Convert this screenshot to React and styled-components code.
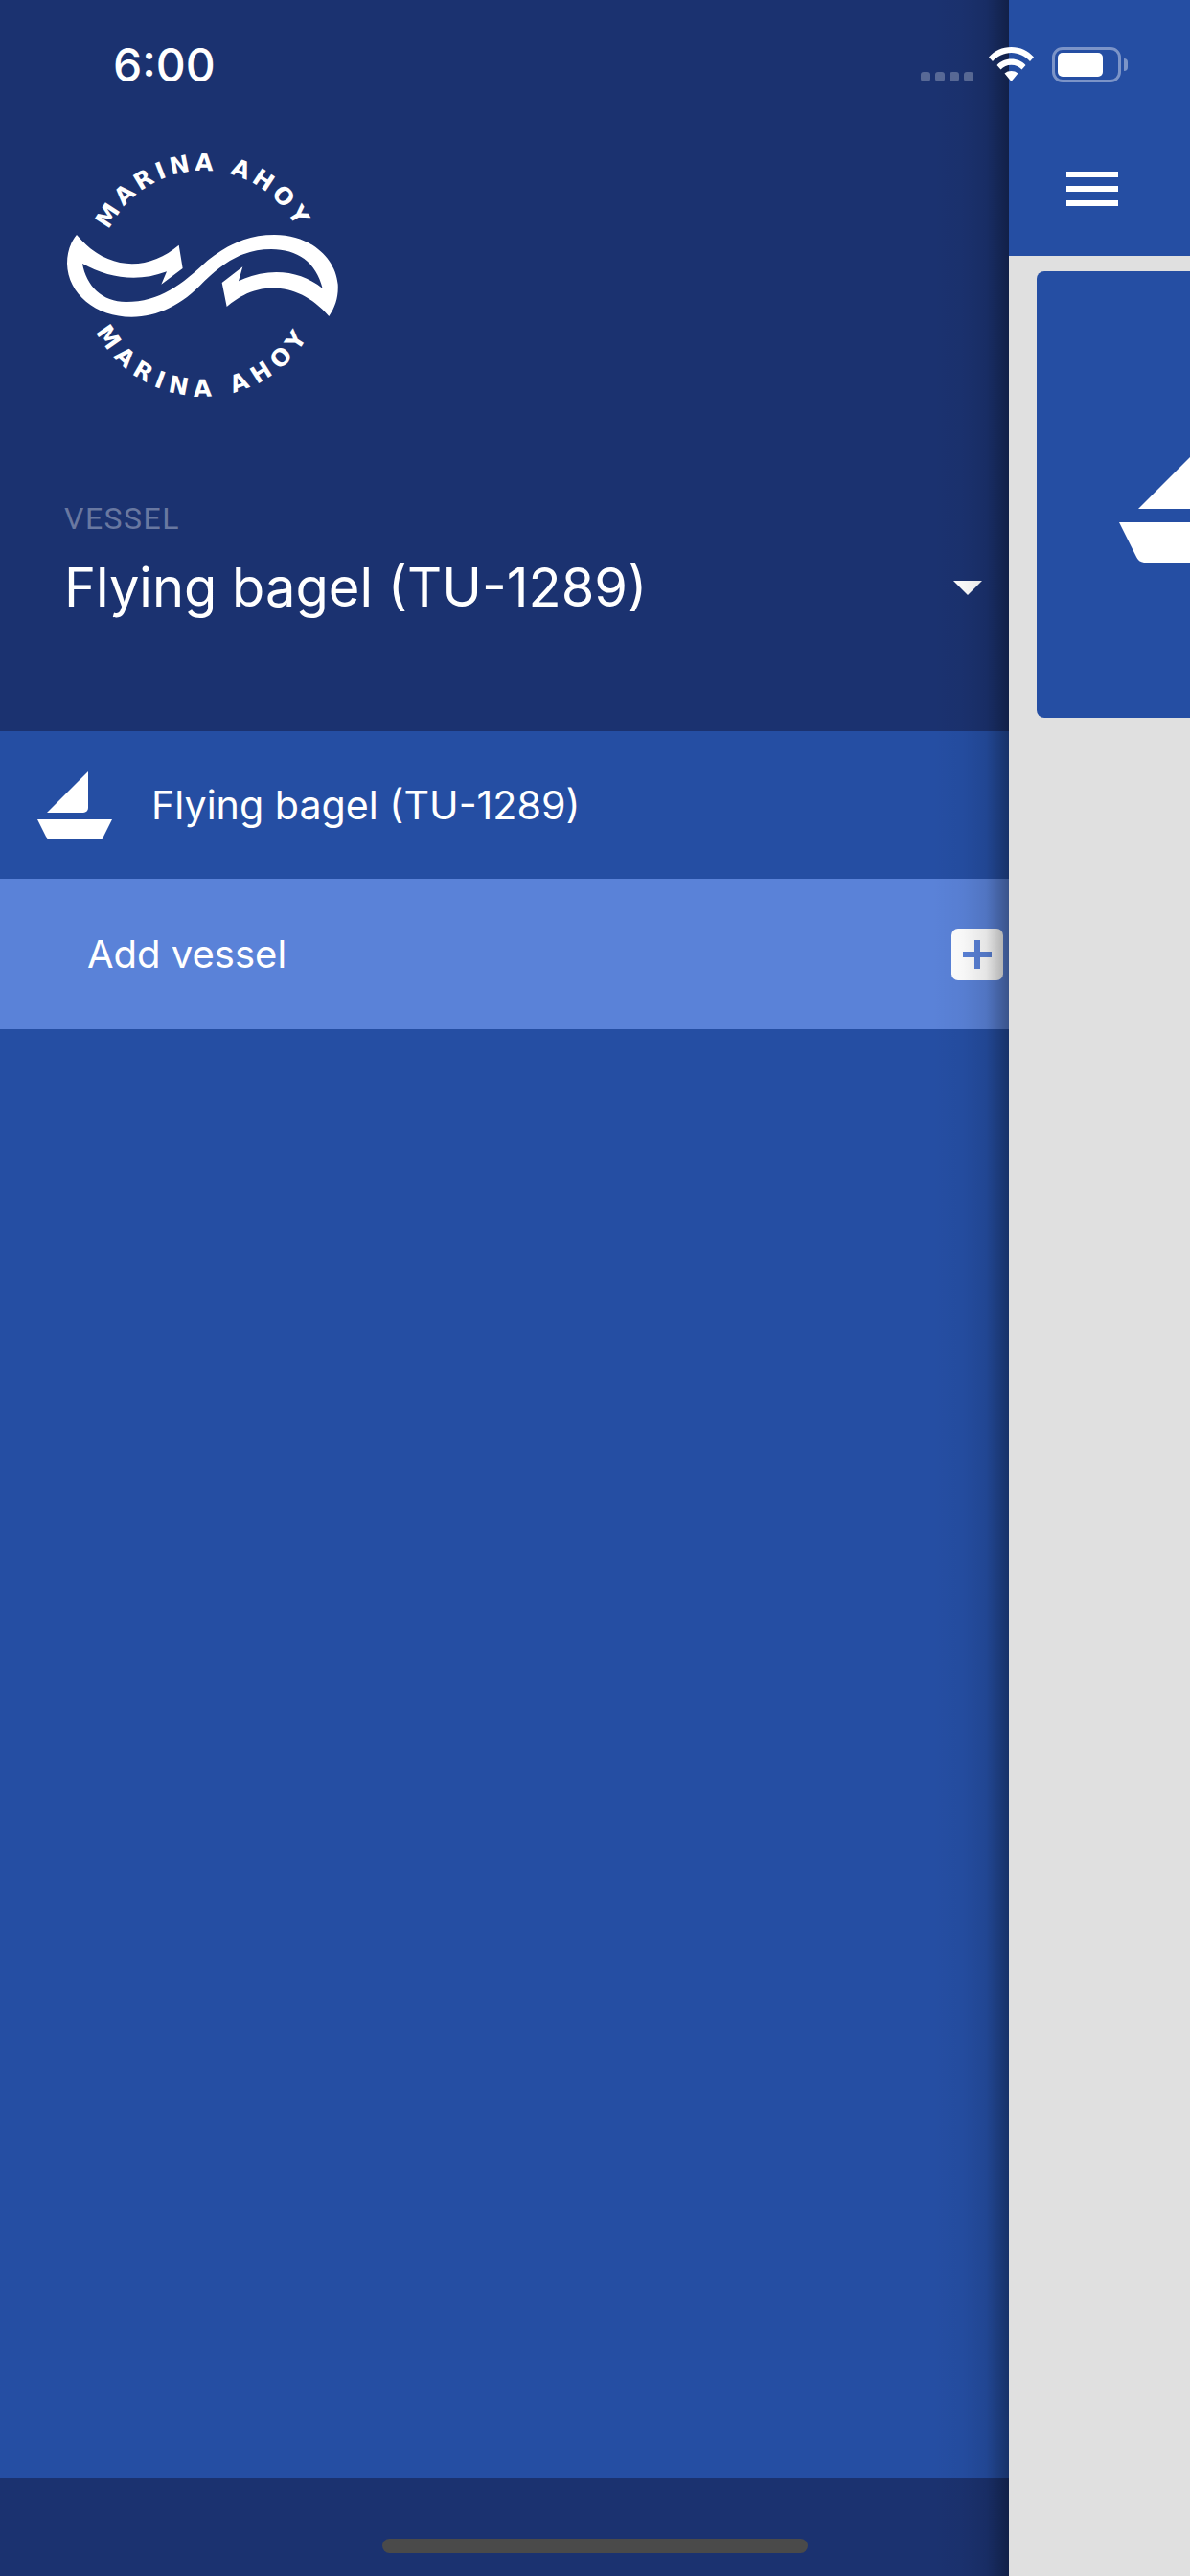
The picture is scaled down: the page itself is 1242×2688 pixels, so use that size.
import styled, { createGlobalStyle } from 'styled-components'

const colors = {
  dark: '#1b3270',
  blue: '#254ea3',
  light: '#5a82d8',
  page: '#e0e0e0',
}

const GlobalStyle = createGlobalStyle`
  html, body {
    margin: 0;
    padding: 0;
    background: ${colors.page};
  }
  * {
    box-sizing: border-box;
  }
`

const Logo = () => (
  <LogoSvg viewBox="0 0 960 900">
    <defs>
      <path id="logoTop" d="M159 441 A327 327 0 0 1 813 441" />
      <path id="logoBottom" d="M106 441 A380 380 0 0 0 866 441" />
    </defs>
    <LogoText $spacing={13}>
      <textPath href="#logoTop" startOffset="50%">MARINA AHOY</textPath>
    </LogoText>
    <LogoText $spacing={21}>
      <textPath href="#logoBottom" startOffset="50%">MARINA AHOY</textPath>
    </LogoText>
    <path
      fill="#fff"
      d="M90 315 C70 340 60 370 60 405 C62 500 150 572 262 572 C345 572 420 535 490 460 C560 392 620 360 700 360 C780 360 840 400 860 483 C790 425 690 415 597 460 L610 415 L545 465 L560 540 C650 460 780 455 880 570 C900 540 910 510 908 470 C900 385 820 315 710 315 C625 315 565 345 500 395 C420 470 350 525 245 525 C170 525 120 475 108 405 C190 450 280 465 372 430 L355 470 L422 420 L410 347 C320 425 190 435 90 315 Z"
    />
  </LogoSvg>
)

const Boat = ({ width = 78 }) => (
  <svg viewBox="0 0 78 71" width={width} height={(width * 71) / 78} fill="#fff" style={{ display: 'block', flexShrink: 0 }}>
    <path d="M53 0 V38 a5 5 0 0 1 -5 5 H10 Z" />
    <path d="M0 50 H78 L69 68 a5 5 0 0 1 -4 3 H13 a5 5 0 0 1 -4 -3 Z" />
  </svg>
)

const Wifi = () => (
  <svg width="47" height="36" viewBox="0 0 47 36" fill="#fff">
    <path d="M0 10.5 C6 4 14 0 23.5 0 C33 0 41 4 47 10.5 L43 15 C38 9.500 31 6 23.500 6 C16 6 9 9.500 4 15 Z" />
    <path d="M8.500 19 C12 15 17.500 12.500 23.500 12.500 C29.500 12.500 35 15 38.500 19 L34.500 23.500 C31.500 20.500 28 18.800 23.500 18.800 C19 18.800 15.500 20.500 12.500 23.500 Z" />
    <path d="M16.500 27.500 C18.500 25.800 21 25 23.500 25 C26 25 28.500 25.800 30.500 27.500 L23.500 36 Z" />
  </svg>
)

export default function App() {
  return (
    <Screen>
      <GlobalStyle />
      <Drawer>
        <DrawerHeader>
          <Logo />
          <FieldLabel>VESSEL</FieldLabel>
          <SelectRow>
            <SelectValue>Flying bagel (TU-1289)</SelectValue>
            <Caret />
          </SelectRow>
        </DrawerHeader>
        <VesselRow>
          <Boat />
          <RowLabel $size={41.2}>Flying bagel (TU-1289)</RowLabel>
        </VesselRow>
        <AddRow>
          <RowLabel $size={40}>Add vessel</RowLabel>
          <PlusButton />
        </AddRow>
        <DrawerBody />
        <DrawerFooter />
        <DrawerShade />
      </Drawer>
      <Content>
        <TopBar>
          <Hamburger>
            <span />
            <span />
            <span />
          </Hamburger>
        </TopBar>
        <VesselCard>
          <Boat width={156} />
        </VesselCard>
      </Content>
      <StatusBar>
        <Time>6:00</Time>
        <StatusIcons>
          <Signal>
            <i />
            <i />
            <i />
            <i />
          </Signal>
          <Wifi />
          <Battery />
        </StatusIcons>
      </StatusBar>
      <HomeIndicator />
    </Screen>
  )
}

const Screen = styled.div`
  position: relative;
  display: flex;
  width: 1242px;
  height: 2688px;
  overflow: hidden;
  font-family: Inter, Roboto, "Liberation Sans", sans-serif;
  background: ${colors.page};
`

const Drawer = styled.aside`
  position: relative;
  display: flex;
  flex-direction: column;
  flex: 0 0 1053px;
  background: ${colors.blue};
`

const DrawerHeader = styled.header`
  height: 763px;
  padding-top: 140px;
  background: ${colors.dark};
`

const LogoSvg = styled.svg`
  display: block;
  width: 320px;
  height: 300px;
  margin-left: 50px;
`

const LogoText = styled.text`
  font-family: "DejaVu Sans", sans-serif;
  font-size: 74px;
  font-weight: 700;
  letter-spacing: ${({ $spacing }) => $spacing}px;
  text-anchor: middle;
  fill: #fff;
`

const FieldLabel = styled.div`
  margin: 83px 0 0 67px;
  font-family: Roboto, sans-serif;
  font-size: 32px;
  line-height: 36px;
  letter-spacing: 1.500px;
  color: rgba(255, 255, 255, 0.35);
`

const SelectRow = styled.div`
  display: flex;
  align-items: center;
  justify-content: space-between;
  margin-top: 19px;
  padding: 0 28px 0 67px;
`

const SelectValue = styled.div`
  font-size: 56px;
  line-height: 70px;
  color: #fff;
`

const Caret = styled.div`
  width: 0;
  height: 0;
  border-left: 15px solid transparent;
  border-right: 15px solid transparent;
  border-top: 15px solid #fff;
`

const VesselRow = styled.div`
  display: flex;
  align-items: center;
  gap: 41px;
  height: 154px;
  padding-left: 39px;
`

const RowLabel = styled.span`
  font-size: ${({ $size }) => $size}px;
  line-height: 50px;
  color: #fff;
`

const AddRow = styled.div`
  display: flex;
  align-items: center;
  justify-content: space-between;
  height: 157px;
  padding: 0 6px 0 91px;
  background: ${colors.light};
`

const PlusButton = styled.div`
  position: relative;
  width: 54px;
  height: 54px;
  border-radius: 7px;
  background: #fff;

  &:before,
  &:after {
    content: '';
    position: absolute;
    background: ${colors.light};
  }
  &:before {
    left: 12px;
    top: 24px;
    width: 30px;
    height: 6px;
  }
  &:after {
    left: 24px;
    top: 12px;
    width: 6px;
    height: 30px;
  }
`

const DrawerBody = styled.div`
  flex: 1;
`

const DrawerFooter = styled.footer`
  height: 102px;
  background: ${colors.dark};
`

const DrawerShade = styled.div`
  position: absolute;
  top: 0;
  right: 0;
  bottom: 0;
  width: 80px;
  pointer-events: none;
  background: linear-gradient(
    to right,
    rgba(0, 0, 0, 0) 0%,
    rgba(0, 0, 0, 0.03) 40%,
    rgba(0, 0, 0, 0.1) 70%,
    rgba(0, 0, 0, 0.36) 100%
  );
`

const Content = styled.main`
  display: flex;
  flex-direction: column;
  flex: 1;
  min-width: 0;
  overflow: hidden;
`

const TopBar = styled.div`
  height: 267px;
  padding: 179px 0 0 60px;
  background: ${colors.blue};
`

const Hamburger = styled.div`
  display: flex;
  flex-direction: column;
  gap: 9px;
  width: 54px;

  span {
    display: block;
    height: 6px;
    background: #fff;
  }
`

const VesselCard = styled.div`
  display: flex;
  align-items: center;
  justify-content: center;
  flex-shrink: 0;
  width: 328px;
  height: 466px;
  margin: 16px 0 0 29px;
  border-radius: 8px;
  background: ${colors.blue};
`

const StatusBar = styled.div`
  position: absolute;
  top: 0;
  left: 0;
  right: 0;
  display: flex;
  justify-content: space-between;
  height: 100px;
  padding: 49px 72px 0 118px;
  color: #fff;
`

const Time = styled.div`
  font-family: Inter, sans-serif;
  font-size: 48px;
  font-weight: 500;
  line-height: 38px;
`

const StatusIcons = styled.div`
  display: flex;
  align-items: flex-start;
`

const Signal = styled.div`
  display: flex;
  gap: 5px;
  margin: 26px 16px 0 0;

  i {
    display: block;
    width: 10px;
    height: 10px;
    border-radius: 3px;
    background: rgba(255, 255, 255, 0.27);
  }
`

const Battery = styled.div`
  position: relative;
  width: 72px;
  height: 37px;
  margin-left: 19px;
  border: 3px solid rgba(255, 255, 255, 0.4);
  border-radius: 11px;

  &:before {
    content: '';
    position: absolute;
    left: 3px;
    top: 3px;
    width: 47px;
    height: 25px;
    border-radius: 5px;
    background: #fff;
  }
  &:after {
    content: '';
    position: absolute;
    left: 72px;
    top: 9px;
    width: 4px;
    height: 13px;
    border-radius: 0 4px 4px 0;
    background: rgba(255, 255, 255, 0.4);
  }
`

const HomeIndicator = styled.div`
  position: absolute;
  left: 399px;
  bottom: 24px;
  width: 444px;
  height: 15px;
  border-radius: 8px;
  background: #4a4a4a;
`
